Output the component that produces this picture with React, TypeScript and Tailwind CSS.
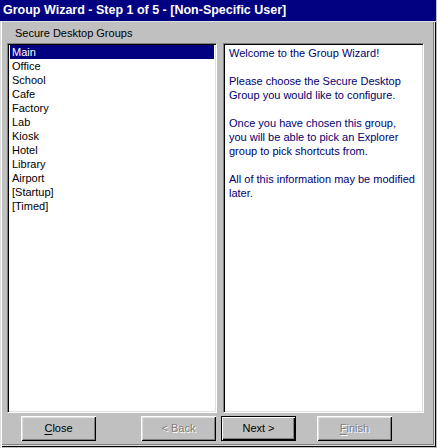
import clsx from 'clsx'

const groups = ['Main', 'Office', 'School', 'Cafe', 'Factory', 'Lab', 'Kiosk', 'Hotel', 'Library', 'Airport', '[Startup]', '[Timed]']

function Button({
  children,
  disabled,
  primary,
  className,
}: {
  children: React.ReactNode
  disabled?: boolean
  primary?: boolean
  className?: string
}) {
  return (
    <div
      className={clsx(
        'w-[75px] h-[25px] flex items-center justify-center text-[11px] bg-[#c0c0c0]',
        primary
          ? 'border border-black shadow-[inset_1px_1px_0_#fff,inset_-1px_-1px_0_#000,inset_-2px_-2px_0_#808080]'
          : 'shadow-[inset_1px_1px_0_#fff,inset_-1px_-1px_0_#000,inset_2px_2px_0_#dfdfdf,inset_-2px_-2px_0_#808080]',
        disabled ? 'text-[#808080] [text-shadow:1px_1px_0_#fff]' : 'text-black',
        className
      )}
    >
      {children}
    </div>
  )
}

export default function App() {
  return (
    <div className="w-[437px] h-[448px] bg-[#c0c0c0] flex flex-col font-['Liberation_Sans',Arial,sans-serif] shadow-[inset_1px_0_0_#dfdfdf,inset_2px_0_0_#fff,inset_-1px_-1px_0_#c0c0c0,inset_-2px_-2px_0_#000,inset_-3px_-3px_0_#dfdfdf,inset_-4px_-4px_0_#808080]">
      <div className="h-[21px] w-[433px] bg-[#000080] flex items-center pl-[3px] text-white font-bold text-[12.5px] border-b border-[#dfdfdf] box-content">
        Group Wizard - Step 1 of 5 - [Non-Specific User]
      </div>

      <div className="h-[21px] flex items-center pl-[15px] pt-[1px] text-[11px] text-black">
        Secure Desktop Groups
      </div>

      <div className="flex pl-[7px] gap-[6px]">
        <div className="w-[210px] h-[370px] bg-white border border-t-[#808080] border-l-[#808080] border-b-white border-r-white shadow-[inset_1px_1px_0_#000,inset_-1px_-1px_0_#dfdfdf] pt-[1px] pl-[1px] pr-[1px]">
          {groups.map((g, i) => (
            <div
              key={g}
              className={clsx(
                'h-[14px] leading-[14px] text-[11px] pl-[2px] ml-[1px] mr-[1px]',
                i === 0 ? 'bg-[#000080] text-white' : 'text-black'
              )}
            >
              {g}
            </div>
          ))}
        </div>

        <div className="w-[201px] h-[370px] bg-white border border-t-[#808080] border-l-[#808080] border-b-white border-r-white shadow-[inset_1px_1px_0_#000,inset_-1px_-1px_0_#dfdfdf] pt-[2px] pl-[5px] text-[11px] leading-[14px] text-[#000070]">
          <p>Welcome to the Group Wizard!</p>
          <p className="mt-[14px]">
            Please choose the Secure Desktop
            <br />
            Group you would like to configure.
          </p>
          <p className="mt-[14px]">
            Once you have chosen this group,
            <br />
            you will be able to pick an Explorer
            <br />
            group to pick shortcuts from.
          </p>
          <p className="mt-[14px]">
            All of this information may be modified
            <br />
            later.
          </p>
        </div>
      </div>

      <div className="flex pl-[21px] mt-[3px]">
        <Button>
          <span className="underline underline-offset-2">C</span>lose
        </Button>
        <Button disabled className="ml-[45px]">
          &lt; Back
        </Button>
        <Button primary className="ml-[5px]">
          Next &gt;
        </Button>
        <Button disabled className="ml-[21px]">
          <span className="underline underline-offset-2">F</span>inish
        </Button>
      </div>
    </div>
  )
}
